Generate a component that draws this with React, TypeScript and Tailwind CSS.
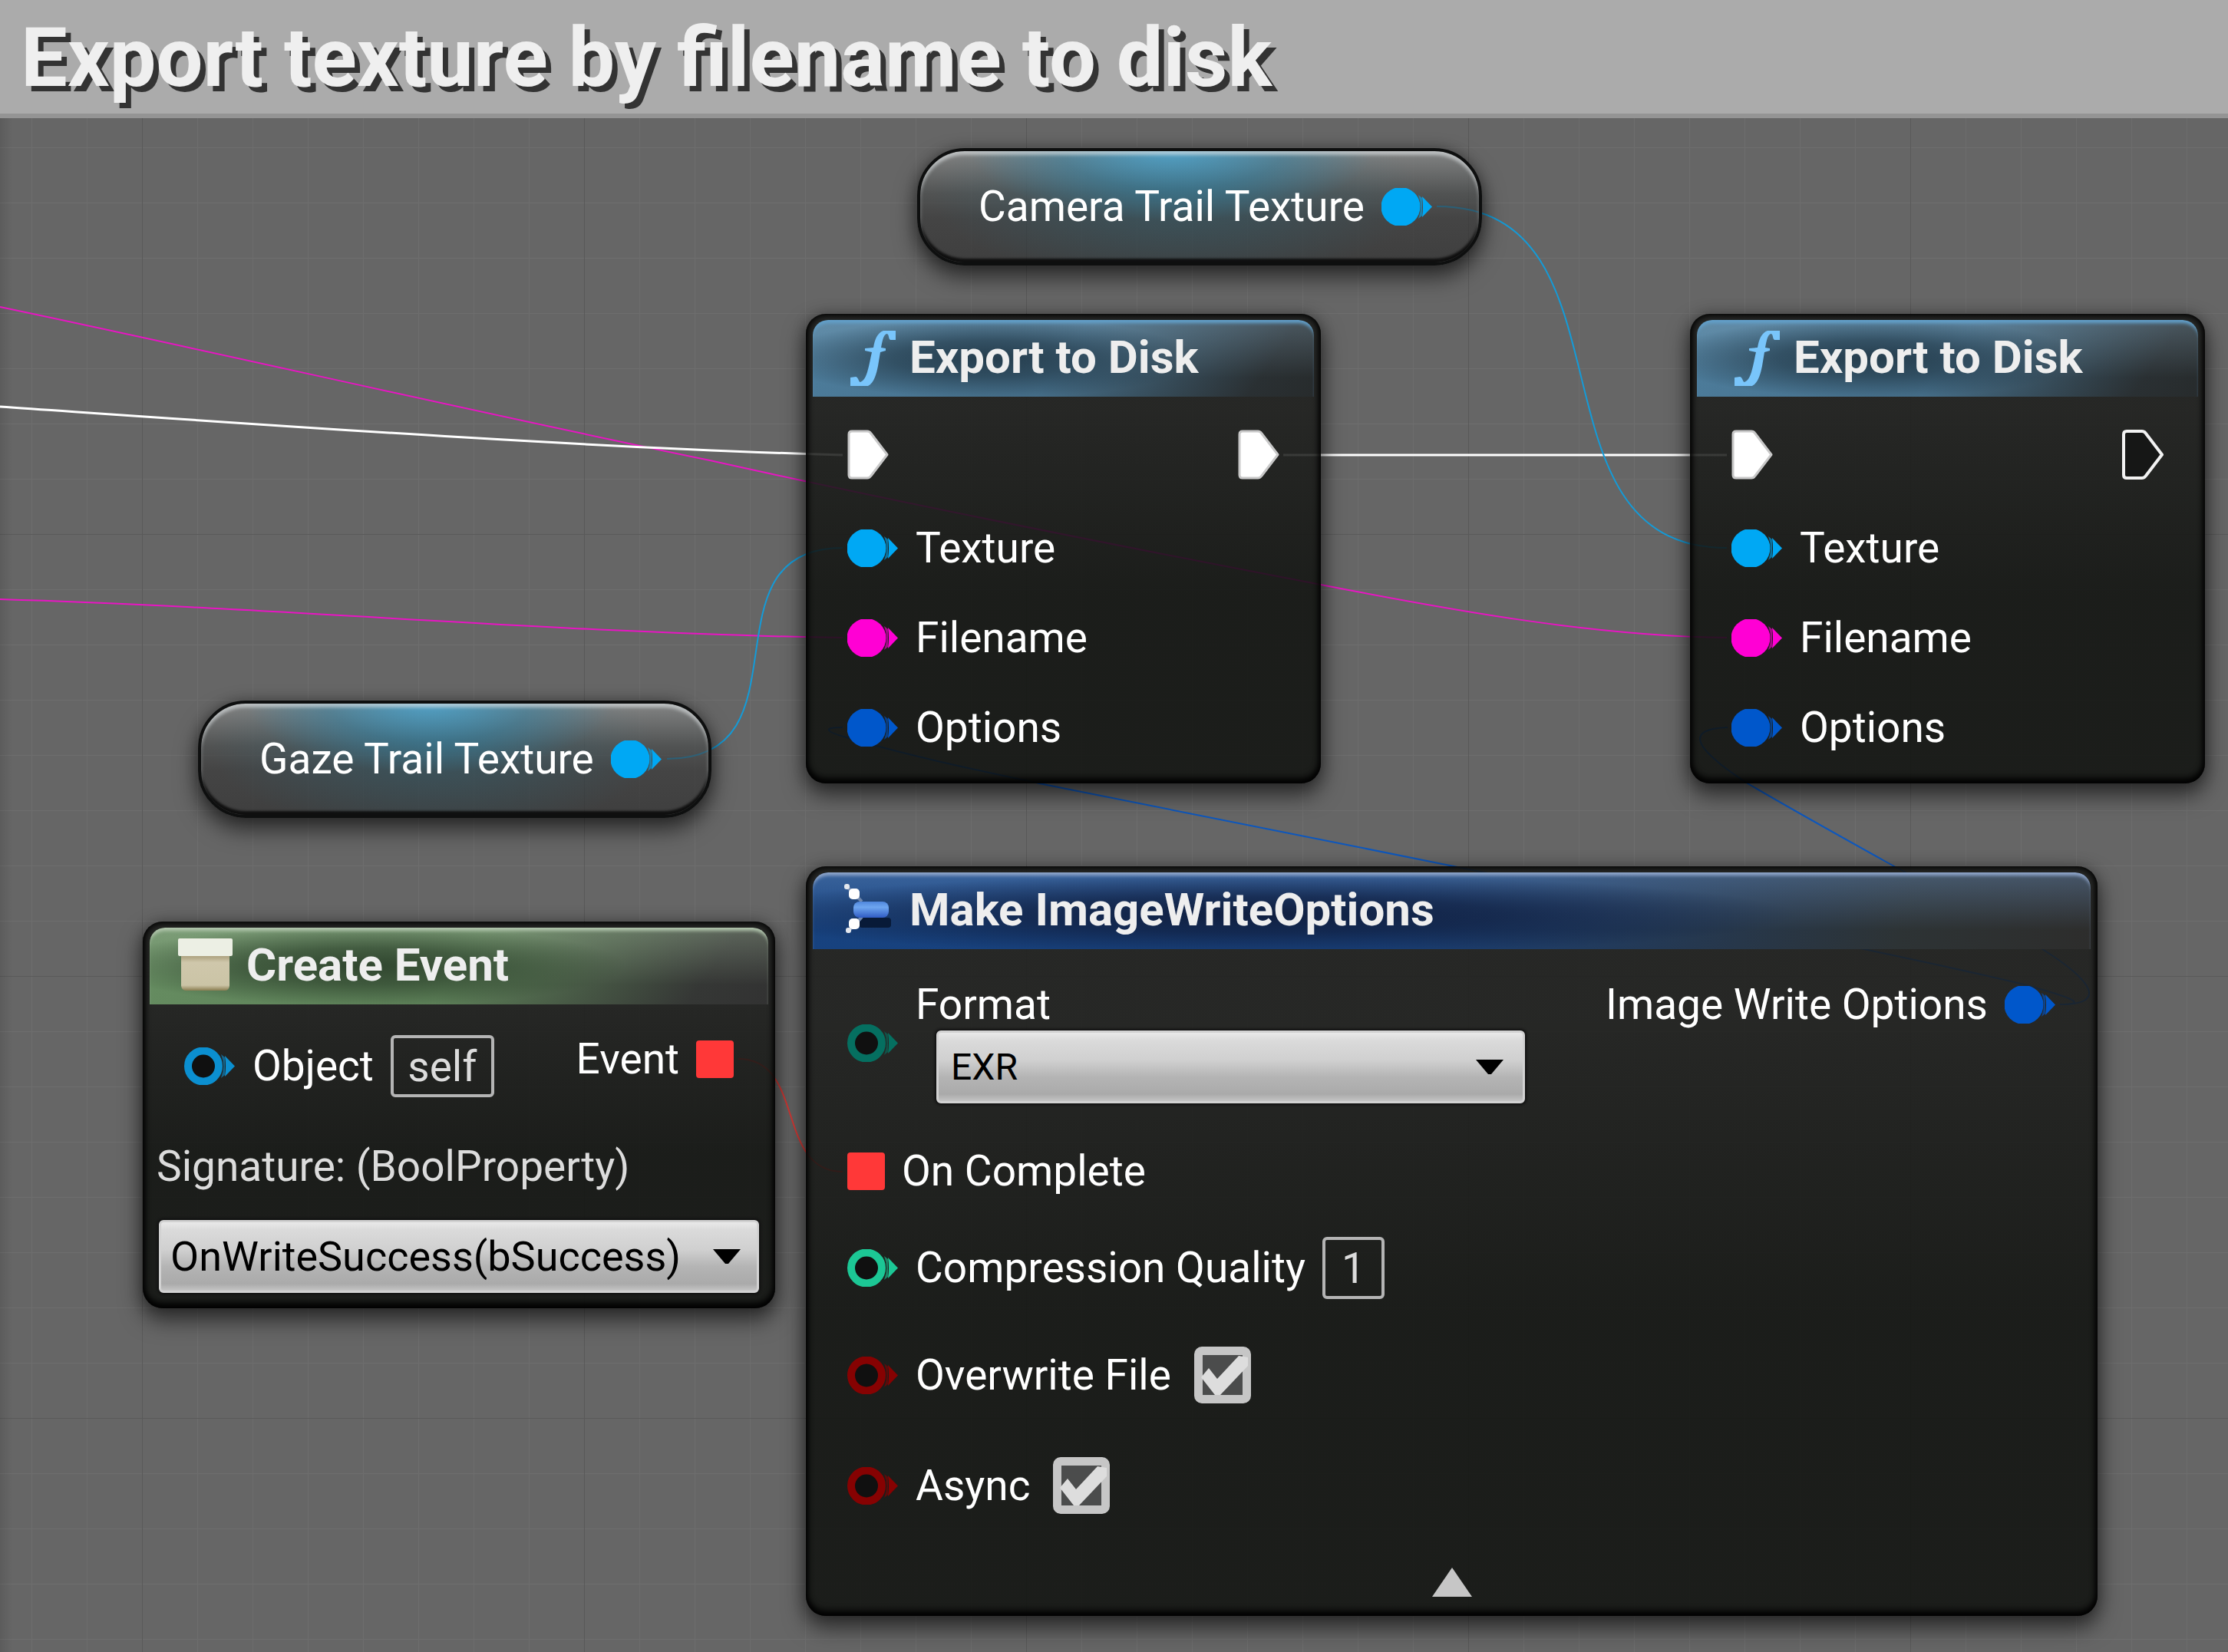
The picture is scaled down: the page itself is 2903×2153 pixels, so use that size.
import type { ReactNode } from "react";

const FONT = "font-['Roboto','Noto_Sans',sans-serif]";

const NODE_BOX =
  "absolute flex flex-col rounded-[26px] bg-[linear-gradient(to_bottom,rgba(28,29,27,0.86)_0%,rgba(28,29,27,0.86)_20%,rgba(15,17,14,0.86)_60%)] shadow-[0_14px_28px_2px_rgba(0,0,0,0.55),0_0_18px_rgba(0,0,0,0.25),inset_0_0_7px_3px_rgba(0,0,0,0.85),inset_0_-7px_8px_rgba(0,0,0,0.8)]";

const LABEL = "text-[55px] leading-[63px] text-white whitespace-nowrap";

function Pin({ color, hollow = false }: { color: string; hollow?: boolean }) {
  return (
    <svg viewBox="0 0 67 49" className="h-[49px] w-[67px] shrink-0" aria-hidden="true">
      {hollow ? (
        <circle cx="25" cy="24.5" r="20" fill="#101010" stroke={color} strokeWidth="10" />
      ) : (
        <circle cx="25" cy="24.5" r="25.5" fill={color} />
      )}
      <path d="M48 9 Q54 24.5 48 40 L53 36 V13 Z" fill={color} opacity="0.6" />
      <path d="M53 11 L66 24.5 L53 38 Q55 24.5 53 11 Z" fill={color} />
    </svg>
  );
}

function DelegatePin() {
  return (
    <svg viewBox="0 0 49 49" className="size-[49px] shrink-0" aria-hidden="true">
      <rect width="49" height="49" rx="4" fill="#ff3838" />
    </svg>
  );
}

function ExecPin({ connected }: { connected: boolean }) {
  return (
    <svg viewBox="0 0 54 65" className="h-[65px] w-[54px] shrink-0" aria-hidden="true">
      <path
        d="M2 6 Q2 2 6 2 H26 Q29 2 31 5 L52 32.5 L31 60 Q29 63 26 63 H6 Q2 63 2 59 Z"
        fill={connected ? "#ffffff" : "#161716"}
        stroke={connected ? "#c8c8c8" : "#f2f2f2"}
        strokeWidth={connected ? 3 : 4}
        strokeLinejoin="round"
      />
    </svg>
  );
}

function FunctionIcon() {
  return (
    <svg viewBox="0 0 60 72" className="h-[72px] w-[60px] shrink-0" aria-hidden="true">
      <path
        d="M60 0 H44 C36 3 33 11 31 22 L20 23 V26 L29 28 C27 36 26 44 23 54 C21 60 19 65 14 67 C11 66 12 61 8 60 L1 61 V72 H24 C32 68 35 56 37 46 L40 28 L47 26 V23 L41 22 C43 12 44 6 48 4 C52 4 50 10 53 12 H60 Z"
        fill="#79c5fb"
      />
    </svg>
  );
}

function StructIcon() {
  return (
    <svg viewBox="0 0 72 72" className="size-[72px] shrink-0" aria-hidden="true">
      <defs>
        <linearGradient id="bar" x1="0" y1="0" x2="0" y2="1">
          <stop offset="0" stopColor="#4f86dc" />
          <stop offset="0.35" stopColor="#6ea6f0" />
          <stop offset="1" stopColor="#2f5bc4" />
        </linearGradient>
      </defs>
      <rect x="20" y="45" width="42" height="13" rx="4" fill="#081a38" />
      <path d="M4 4 L24 24 M6 63 L24 44" stroke="#6f87ad" strokeWidth="4" />
      <rect x="7" y="7" width="14" height="14" rx="5" fill="#ffffff" />
      <rect x="1" y="1" width="7" height="7" rx="3" fill="#e4e8ee" />
      <rect x="7" y="46" width="14" height="14" rx="5" fill="#ffffff" />
      <rect x="3" y="58" width="7" height="7" rx="3" fill="#e4e8ee" />
      <rect x="13" y="24" width="46" height="21" rx="8" fill="url(#bar)" />
    </svg>
  );
}

function EventIcon() {
  return (
    <svg viewBox="0 0 72 72" className="size-[72px] shrink-0" aria-hidden="true">
      <defs>
        <linearGradient id="crate" x1="0" y1="0" x2="0" y2="1">
          <stop offset="0" stopColor="#a89c78" />
          <stop offset="0.2" stopColor="#cfc7ab" />
          <stop offset="0.85" stopColor="#cbc4a6" />
          <stop offset="1" stopColor="#8a7c50" />
        </linearGradient>
      </defs>
      <path d="M4 22 H67 V62 Q66 68 61 68 H11 Q5 68 4 62 Z" fill="url(#crate)" />
      <rect x="0" y="0" width="71" height="23" rx="2" fill="#ecefe4" />
    </svg>
  );
}

type HeaderTone = "function" | "struct" | "event";

const HEADER_TONES: Record<HeaderTone, string> = {
  function:
    "pl-[48px] gap-[18px] shadow-[inset_0_6px_4px_-2px_#62a0cb] bg-[radial-gradient(ellipse_42%_52%_at_35%_50%,#253d4d_0%,rgba(37,61,77,0.7)_45%,rgba(37,61,77,0)_100%),linear-gradient(to_bottom,rgba(150,180,200,0.3)_0%,rgba(150,180,200,0)_75%),linear-gradient(125deg,#4d7d9c_0%,#466f8a_50%,#2a3033_88%,#272b2c_100%)]",
  struct:
    "pl-[40px] gap-[14px] shadow-[inset_0_6px_4px_-2px_#8fa6cb] bg-[radial-gradient(ellipse_42%_52%_at_35%_55%,#101f40_0%,rgba(16,31,64,0.7)_45%,rgba(16,31,64,0)_100%),linear-gradient(to_bottom,rgba(110,150,200,0.4)_0%,rgba(120,150,190,0)_75%),linear-gradient(105deg,#17427f_0%,#194079_45%,#2d3335_85%,#2d2d2c_100%)]",
  event:
    "pl-[37px] gap-[17px] shadow-[inset_0_6px_4px_-2px_#b2c6ad] bg-[radial-gradient(ellipse_42%_52%_at_35%_50%,#30462f_0%,rgba(48,70,47,0.7)_45%,rgba(48,70,47,0)_100%),linear-gradient(to_bottom,rgba(170,190,165,0.35)_0%,rgba(170,190,165,0)_75%),linear-gradient(125deg,#668d61_0%,#5d8058_50%,#353735_88%,#323232_100%)]",
};

function NodeHeader({ tone, icon, title }: { tone: HeaderTone; icon: ReactNode; title: string }) {
  return (
    <header className={`mx-[9px] mt-2 flex h-[100px] items-center rounded-t-[20px] ${HEADER_TONES[tone]}`}>
      {icon}
      <h2 className="pb-[3px] text-[60px] leading-[64px] font-bold whitespace-nowrap text-[#eeeeee]">{title}</h2>
    </header>
  );
}

function ExportNode({ place, nextConnected }: { place: string; nextConnected: boolean }) {
  return (
    <section className={`${NODE_BOX} ${place} w-[671px]`}>
      <NodeHeader tone="function" icon={<FunctionIcon />} title="Export to Disk" />
      <div className="flex flex-col px-[54px] pt-[11px] pb-[14px]">
        <div className="flex h-32 items-center justify-between">
          <ExecPin connected />
          <ExecPin connected={nextConnected} />
        </div>
        {[
          ["Texture", "#00a8f4"],
          ["Filename", "#ff00d4"],
          ["Options", "#0057cb"],
        ].map(([name, color]) => (
          <div key={name} className="flex h-[117px] items-center gap-[22px]">
            <Pin color={color} />
            <span className={LABEL}>{name}</span>
          </div>
        ))}
      </div>
    </section>
  );
}

function VariableNode({ place, name }: { place: string; name: string }) {
  return (
    <section
      className={`absolute ${place} flex h-[153px] items-center gap-[22px] rounded-[62px] border-[4px] border-[#0e0f0f] bg-[radial-gradient(ellipse_36%_62%_at_45%_0%,rgba(70,175,225,0.7)_0%,rgba(50,140,180,0.4)_55%,rgba(50,140,180,0)_100%),radial-gradient(ellipse_44%_80%_at_46%_40%,rgba(40,110,135,0.4)_0%,rgba(40,110,135,0)_100%),linear-gradient(to_bottom,rgba(140,142,142,0.75)_0%,rgba(70,73,73,0.65)_38%,rgba(46,46,46,0.6)_60%,rgba(42,42,42,0.65)_100%)] pr-[60px] pl-[76px] shadow-[0_14px_28px_2px_rgba(0,0,0,0.55),0_0_16px_rgba(0,0,0,0.25),inset_0_5px_4px_rgba(225,230,232,0.6),inset_0_-5px_3px_rgba(10,10,10,0.9)]`}
    >
      <span className={LABEL}>{name}</span>
      <Pin color="#00a8f4" />
    </section>
  );
}

function DropDown({
  id,
  label,
  value,
  width,
  text,
  arrow,
}: {
  id: string;
  label: string;
  value: string;
  width: string;
  text: string;
  arrow: string;
}) {
  return (
    <div className={`relative ${width}`}>
      <select
        id={id}
        aria-label={label}
        defaultValue={value}
        className={`block h-[95px] w-full appearance-none rounded-[6px] border-[3px] border-[#d2d2d2] bg-[linear-gradient(to_bottom,#e9e9e9_0%,#dadada_12%,#d0d0d0_40%,#b4b4b4_65%,#aaaaaa_90%,#c4c4c4_100%)] text-black shadow-[0_0_3px_2px_#111111] ${text}`}
      >
        <option>{value}</option>
      </select>
      <svg
        viewBox="0 0 36 20"
        className={`pointer-events-none absolute top-[38px] h-[20px] w-[36px] ${arrow}`}
        aria-hidden="true"
      >
        <path d="M0 0 H36 L20 19 H16 Z" fill="#000000" />
      </svg>
    </div>
  );
}

function ValueBox({ id, label, value, width }: { id: string; label: string; value: string; width: string }) {
  return (
    <input
      id={id}
      type="text"
      aria-label={label}
      defaultValue={value}
      className={`h-[81px] rounded-[6px] border-[4px] border-[#b4b4b4] bg-transparent text-center text-[55px] leading-[63px] text-[#dcdcdc] ${width}`}
    />
  );
}

function CheckBox({ id }: { id: string }) {
  return (
    <span className="relative ml-2 block size-[74px]">
      <input
        id={id}
        type="checkbox"
        defaultChecked
        className="block size-full appearance-none rounded-[10px] border-[11px] border-[#c6c6c6] bg-[#4b4c4c]"
      />
      <svg viewBox="0 0 74 74" className="pointer-events-none absolute inset-0 size-full" aria-hidden="true">
        <path d="M19 28 L30 42 L58 12 L70 14 V25 L34 63 H27 L9 40 Z" fill="#dddddd" />
      </svg>
    </span>
  );
}

function Wires() {
  return (
    <svg width="2903" height="2153" viewBox="0 154 2903 2153" className="absolute top-0 left-0" fill="none" aria-hidden="true">
      <g strokeWidth="2">
        <g stroke="#e815c3">
          <path d="M0 400 C300 463 600 533 925 600 C1180 657 1450 710 1721 762 C1900 797 2080 829 2250 831" />
          <path d="M0 781 C370 792 740 826 1098 831" />
        </g>
        <g stroke="#ffffff" strokeWidth="3">
          <path d="M0 530 C350 554 750 583 1098 593" />
          <path d="M1672 593 H2250" />
        </g>
        <g stroke="#149bd8">
          <path d="M1872 269 C2140 269 1980 714 2250 714" />
          <path d="M869 989 C1060 989 910 714 1098 714" />
        </g>
        <g stroke="#0d57bd">
          <path d="M1098 948 C1072 948 1074 953 1103 961 C1180 984 1270 1003 1354 1021 C1700 1091 2150 1178 2429 1237 C2500 1252 2570 1267 2633 1282 C2700 1300 2722 1309 2684 1309" />
          <path d="M2251 948 C2195 950 2205 974 2277 1021 C2340 1058 2405 1094 2468 1129 C2530 1162 2620 1212 2658 1235 C2730 1280 2745 1309 2684 1309" />
        </g>
        <path stroke="#d83a36" d="M962 1380 C1050 1380 1010 1527 1098 1527" />
      </g>
    </svg>
  );
}

function CreateEventNode({ place }: { place: string }) {
  return (
    <section className={`${NODE_BOX} ${place} w-[824px] pb-5`}>
      <NodeHeader tone="event" icon={<EventIcon />} title="Create Event" />
      <div className="mt-10 flex items-start justify-between px-[54px]">
        <div className="flex items-center gap-[22px]">
          <Pin color="#0b8fd0" hollow />
          <label htmlFor="object" className={LABEL}>
            Object
          </label>
          <ValueBox id="object" label="Object" value="self" width="w-[135px]" />
        </div>
        <div className="flex items-center gap-[22px]">
          <span className={LABEL}>Event</span>
          <DelegatePin />
        </div>
      </div>
      <p className="mt-[59px] px-[18px] text-[55px] leading-[63px] whitespace-nowrap text-[#dcdcdc]">
        Signature: (BoolProperty)
      </p>
      <div className="mt-[38px] px-[21px]">
        <DropDown
          id="handler"
          label="Signature handler"
          value="OnWriteSuccess(bSuccess)"
          width="w-full"
          text="pl-[12px] text-[54px]"
          arrow="right-[24px]"
        />
      </div>
    </section>
  );
}

function MakeOptionsNode({ place }: { place: string }) {
  return (
    <section className={`${NODE_BOX} ${place} w-[1683px] pb-[25px]`}>
      <NodeHeader tone="struct" icon={<StructIcon />} title="Make ImageWriteOptions" />
      <div className="flex items-start justify-between px-[54px] pt-[43px]">
        <div className="flex flex-col">
          <div className="flex items-center gap-[22px]">
            <Pin color="#056f60" hollow />
            <div className="flex flex-col gap-[5px]">
              <label htmlFor="format" className="text-[55px] leading-[58px] text-white">
                Format
              </label>
              <div className="pl-[27px]">
                <DropDown
                  id="format"
                  label="Format"
                  value="EXR"
                  width="w-[767px]"
                  text="pl-[16px] text-[48px]"
                  arrow="right-[28px]"
                />
              </div>
            </div>
          </div>
          <div className="mt-[30px] flex h-[117px] items-center gap-[22px]">
            <DelegatePin />
            <span className={LABEL}>On Complete</span>
          </div>
          <div className="flex h-[135px] items-center gap-[22px]">
            <Pin color="#1cc795" hollow />
            <label htmlFor="quality" className={LABEL}>
              Compression Quality
            </label>
            <ValueBox id="quality" label="Compression Quality" value="1" width="w-[81px]" />
          </div>
          <div className="flex h-[144px] items-center gap-[22px]">
            <Pin color="#860202" hollow />
            <label htmlFor="overwrite" className={LABEL}>
              Overwrite File
            </label>
            <CheckBox id="overwrite" />
          </div>
          <div className="flex h-[144px] items-center gap-[22px]">
            <Pin color="#860202" hollow />
            <label htmlFor="async" className={LABEL}>
              Async
            </label>
            <CheckBox id="async" />
          </div>
        </div>
        <div className="flex h-[58px] items-center gap-[22px]">
          <span className={LABEL}>Image Write Options</span>
          <Pin color="#0057cb" />
        </div>
      </div>
      <button type="button" aria-label="Collapse" className="mt-[35px] self-center">
        <svg viewBox="0 0 52 38" className="block h-[38px] w-[52px]" aria-hidden="true">
          <path d="M26 0 L52 38 H0 Z" fill="#c6c6c6" />
        </svg>
      </button>
    </section>
  );
}

export default function App() {
  return (
    <div className={`flex min-h-screen flex-col ${FONT}`}>
      <header className="border-b-[6px] border-[#949494] bg-[#ababab] px-[27px]">
        <h1 className="h-[148px] text-[108px] leading-[150px] font-bold whitespace-nowrap text-[#efefef] [text-shadow:7px_7px_0_#333333]">
          Export texture by filename to disk
        </h1>
      </header>
      <main className="relative min-h-[1999px] flex-1 overflow-hidden bg-[#666666]">
        <div className="absolute inset-0 bg-[linear-gradient(to_right,#6d6d6d_1px,transparent_1px),linear-gradient(to_bottom,#6e6e6e_1px,transparent_1px)] bg-[size:72px_72px] bg-[position:41px_38px]" />
        <div className="absolute inset-0 bg-[linear-gradient(to_right,#595959_1px,transparent_1px),linear-gradient(to_bottom,#5a5a5a_1px,transparent_1px)] bg-[size:576px_576px] bg-[position:185px_542px]" />
        <div className="absolute inset-y-0 left-0 w-4 bg-linear-to-r from-black/10 to-transparent" />
        <Wires />
        <VariableNode place="left-[1195px] top-[39px]" name="Camera Trail Texture" />
        <VariableNode place="left-[258px] top-[759px]" name="Gaze Trail Texture" />
        <ExportNode place="left-[1050px] top-[255px]" nextConnected />
        <ExportNode place="left-[2202px] top-[255px]" nextConnected={false} />
        <CreateEventNode place="left-[186px] top-[1047px]" />
        <MakeOptionsNode place="left-[1050px] top-[975px]" />
      </main>
    </div>
  );
}
